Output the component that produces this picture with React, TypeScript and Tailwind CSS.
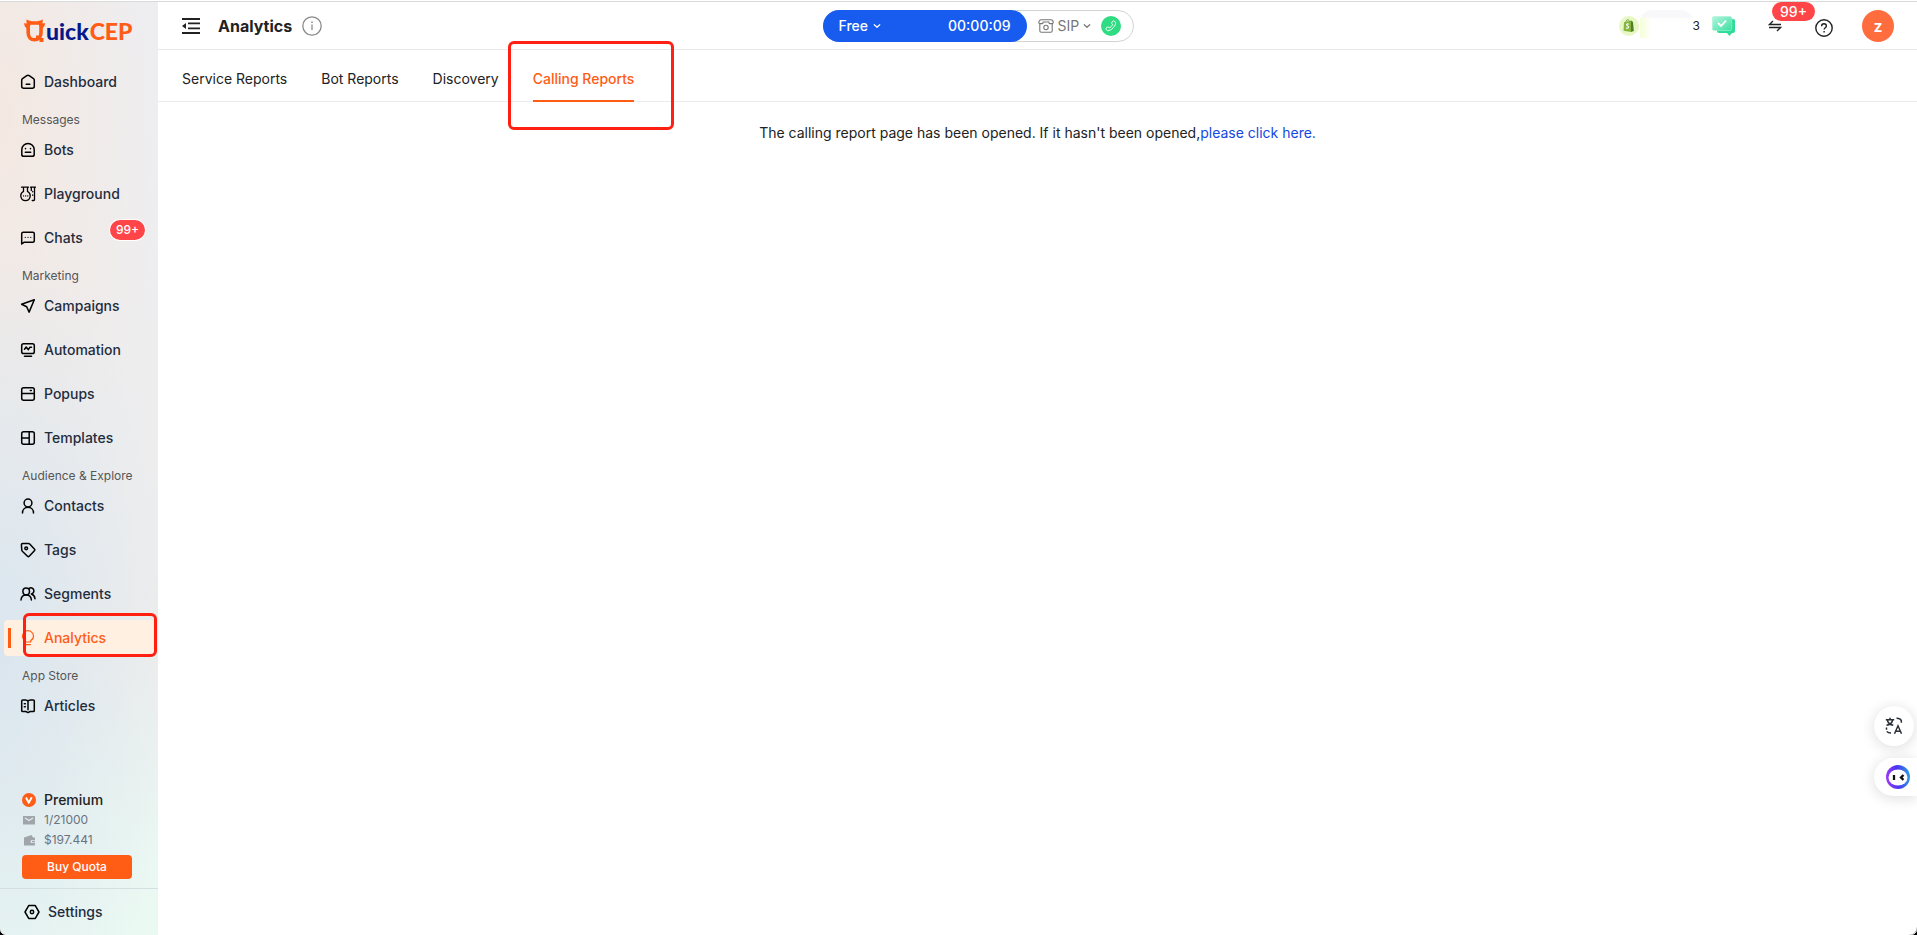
import React from 'react';
import clsx from 'clsx';

interface NavItem {
  label: string;
  icon: React.ReactNode;
  badge?: string;
}

interface NavGroup {
  title?: string;
  items: NavItem[];
}

const Icon = ({ children, className = 'w-4 h-4' }: { children: React.ReactNode; className?: string }) => (
  <svg
    viewBox="0 0 16 16"
    className={clsx('shrink-0', className)}
    fill="none"
    stroke="currentColor"
    strokeWidth="1.5"
    strokeLinecap="round"
    strokeLinejoin="round"
    aria-hidden="true"
  >
    {children}
  </svg>
);

const groups: NavGroup[] = [
  {
    items: [
      {
        label: 'Dashboard',
        icon: (
          <Icon>
            <path d="M1.7 6.3c0-.7.3-1.2.8-1.6L6.8 1.7c.7-.5 1.7-.5 2.4 0l4.300 3c.5.4.8.9.8 1.600v5.900c0 1.100-.9 2-2 2H3.700c-1.100 0-2-.9-2-2z" />
            <path d="M6.200 10.300h3.600" />
          </Icon>
        ),
      },
    ],
  },
  {
    title: 'Messages',
    items: [
      {
        label: 'Bots',
        icon: (
          <Icon>
            <path d="M1.800 7.500A6.200 6 0 0 1 8 1.600a6.200 6 0 0 1 6.200 5.900v4.900c0 1.100-.8 1.900-1.900 1.900H3.700c-1.100 0-1.900-.8-1.900-1.900z" />
            <path d="M5.500 6.600v.2M10.500 6.600v.2M5.300 10.300h5.400" />
          </Icon>
        ),
      },
      {
        label: 'Playground',
        icon: (
          <Icon>
            <path d="M1.500 1.200h7M3.500 1.500v4A4.800 4.800 0 0 0 5.500 14.600a4.800 4.800 0 0 0 2-9.100v-4" strokeWidth="1.300" />
            <path d="M3.500 9.900h.1M5.600 9.900h.1M7.700 9.900h.1M10.500 1.200h5M14.500 1.500v12.200c0 .5-.3.800-.8.800h-1.500M11.300 1.500v3M12.700 5.500v.3M12.700 9v.3" strokeWidth="1.300" />
          </Icon>
        ),
      },
      {
        label: 'Chats',
        badge: '99+',
        icon: (
          <Icon>
            <path d="M1.700 14V3.700c0-.8.700-1.500 1.500-1.500h9.600c.8 0 1.500.7 1.500 1.500v7.100c0 .8-.7 1.500-1.500 1.500H4z" />
            <path d="M5.200 7.300h.1M8 7.300h.1M10.800 7.300h.1" strokeWidth="1.200" />
          </Icon>
        ),
      },
    ],
  },
  {
    title: 'Marketing',
    items: [
      {
        label: 'Campaigns',
        icon: (
          <Icon>
            <path d="M14.300 1.700 1.600 6.300l5.100 2.400 2.400 5.400z" />
          </Icon>
        ),
      },
      {
        label: 'Automation',
        icon: (
          <Icon>
            <rect x="1.700" y="1.700" width="12.600" height="9.800" rx="1.800" />
            <path d="M4.500 7.200 6.200 5l2.200 2.700 1.600-2.500h1.500M4.500 14.300h7" />
          </Icon>
        ),
      },
      {
        label: 'Popups',
        icon: (
          <Icon>
            <rect x="1.700" y="1.700" width="12.600" height="12.600" rx="2" />
            <path d="M1.700 7.500h12.600M10.300 4.600h1" />
          </Icon>
        ),
      },
      {
        label: 'Templates',
        icon: (
          <Icon>
            <rect x="1.700" y="1.700" width="12.600" height="12.600" rx="2" />
            <path d="M9.200 1.700v12.600M1.700 8h7.500" />
          </Icon>
        ),
      },
    ],
  },
  {
    title: 'Audience & Explore',
    items: [
      {
        label: 'Contacts',
        icon: (
          <Icon>
            <circle cx="8" cy="5" r="3.900" />
            <path d="M2.500 15c0-3.100 2.100-5.700 5.500-5.700s5.500 2.600 5.500 5.700" />
          </Icon>
        ),
      },
      {
        label: 'Tags',
        icon: (
          <Icon>
            <path d="M1.400 2.800c0-.7.500-1.200 1.200-1.200l6-.1c.4 0 .8.200 1.100.5l4.700 5c.5.5.5 1.200 0 1.700l-5.200 5.500c-.5.5-1.200.5-1.700 0L2.300 9.200c-.3-.3-.5-.7-.5-1.100z" />
            <circle cx="6.200" cy="6.300" r="1.400" />
          </Icon>
        ),
      },
      {
        label: 'Segments',
        icon: (
          <Icon>
            <circle cx="6.200" cy="5.400" r="3.300" />
            <path d="M1 14c.2-3 2.200-5 5.200-5s5 2 5.200 5M9.200 2.300a3.100 3.100 0 1 1 2.200 5.700c2 .7 3.400 2.500 3.600 4.800" />
          </Icon>
        ),
      },
      {
        label: 'Analytics',
        icon: (
          <Icon>
            <path d="M5.300 12v-1.400C3.700 9.700 2.500 8.100 2.500 6.200a5.500 5.500 0 0 1 11 0c0 1.900-1.200 3.500-2.800 4.400V12zM5.600 14.700h4.800" strokeWidth="1.200" />
          </Icon>
        ),
      },
    ],
  },
  {
    title: 'App Store',
    items: [
      {
        label: 'Articles',
        icon: (
          <Icon>
            <path d="M8 3.200C7.500 2.300 6.700 1.900 5.500 1.900H2.800c-.6 0-1.100.5-1.100 1.100v9.400c0 .6.500 1.100 1.100 1.100h3L8 14.600l2.200-1.100h3c.6 0 1.100-.5 1.100-1.100V3c0-.6-.5-1.100-1.100-1.100h-2.700C9.300 1.900 8.500 2.300 8 3.200zM8 3.200v8.600" />
            <path d="M4.300 5.700h1M4.300 8.800h1" />
          </Icon>
        ),
      },
    ],
  },
];

const tabs = ['Service Reports', 'Bot Reports', 'Discovery', 'Calling Reports'];

const Chevron = () => (
  <Icon className="w-2 h-2">
    <path d="M2.500 5.500 8 10.500l5.500-5" strokeWidth="2.400" />
  </Icon>
);

const Logo = () => (
  <a href="#home" aria-label="QuickCEP" className="flex items-end pl-6 h-[41px] text-[#ff5c16]">
    <svg viewBox="0 0 22 24" className="w-[22px] h-6 shrink-0" fill="none" stroke="currentColor" aria-hidden="true">
      <path
        d="M7 4c-2 0-2.800 1.500-2.800 3.200v6.600c0 4.400 2.600 7 6.300 7s6.500-2.600 6.500-7V7.200C17 5.500 16.200 4 14.200 4z"
        strokeWidth="3.600"
      />
      <path
        d="M4 10C1.200 9 0 6.500.2 4L2.600 4.800 2.400.6C4 1 5.500 2 7.500 2.300zM17.200 10c2.600-1 4-3.500 3.800-6l-2.400.8.200-4.200c-1.600.4-3.100 1.400-5.100 1.700z"
        fill="currentColor"
        stroke="none"
      />
      <path d="M12 16.500h3.500V20H12zM15.500 19h4v4h-4z" fill="currentColor" stroke="none" />
    </svg>
    <span className="font-['Lato'] text-[23px] leading-6 font-black text-[#06198a]">uick</span>
    <span className="ml-px font-['Lato'] text-[23px] leading-6 font-black">CEP</span>
  </a>
);

const NavLink = ({ item, active }: { item: NavItem; active: boolean }) => (
  <a
    href={`#${item.label.toLowerCase()}`}
    className={clsx(
      'relative flex items-center gap-2 h-9 ml-1 mr-1 pl-4 rounded font-medium',
      active ? 'bg-[#fff0e1] text-[#ff5c16]' : 'text-[#1f2d3d]'
    )}
  >
    <span className={active ? 'text-[#ff5c16]' : 'text-black'}>{item.icon}</span>
    {item.label}
    {item.badge && (
      <span className="absolute left-[106px] top-0 h-5 px-[6px] rounded-full bg-[#ff4548] ring-1 ring-white text-white text-xs leading-5 font-medium">
        {item.badge}
      </span>
    )}
    {active && (
      <>
        <span className="absolute left-1 top-2 w-[3px] h-5 bg-[#ff5c16]" />
        <span className="absolute left-[19px] -right-[3px] -top-[7px] -bottom-px border-[3px] border-[#ff2012] rounded-md" />
      </>
    )}
  </a>
);

const Sidebar = () => (
  <aside className="flex flex-col w-[158px] shrink-0 bg-[radial-gradient(ellipse_180px_420px_at_0%_70%,#dae6ef_0%,#dae6ef00_100%),radial-gradient(ellipse_170px_460px_at_0%_12%,#f4e8e1_0%,#f4e8e100_100%),linear-gradient(172deg,#edeef2_0%,#eeedec_70%,#eaf7f2_90%,#ebf9f3_100%)]">
    <Logo />
    <nav className="flex flex-col gap-2 mt-[21px]">
      {groups.map((group, i) => (
        <div key={i}>
          {group.title && <h2 className="h-6 pl-[22px] text-xs leading-6 text-[#555]">{group.title}</h2>}
          <div className="flex flex-col gap-2">
            {group.items.map((item) => (
              <NavLink key={item.label} item={item} active={item.label === 'Analytics'} />
            ))}
          </div>
        </div>
      ))}
    </nav>
    <div className="mt-auto pl-[22px] pr-[26px] pb-[9px]">
      <div className="flex items-center gap-2 h-5 font-medium text-[#222]">
        <svg viewBox="0 0 14 14" className="w-[14px] h-[14px]" aria-hidden="true">
          <circle cx="7" cy="7" r="7" fill="#ff5c16" />
          <path d="M4 4.500 6.700 9.800 9.800 4.300" fill="none" stroke="#fff" strokeWidth="1.900" strokeLinejoin="round" />
        </svg>
        Premium
      </div>
      <div className="flex items-center gap-2 h-5 text-xs text-[#6b7280]">
        <svg viewBox="0 0 14 14" className="w-[14px] h-[14px]" aria-hidden="true">
          <path d="M1 3h12v8.500H1z" fill="#a0a5aa" />
          <path d="m3 5 4 2.500L11 5" fill="none" stroke="#e1ecef" strokeWidth="1.100" />
        </svg>
        1/21000
      </div>
      <div className="flex items-center gap-2 h-5 text-xs text-[#6b7280]">
        <svg viewBox="0 0 14 14" className="w-[14px] h-[14px]" aria-hidden="true">
          <path d="M2 4.500 9.500 2l1.500 2.500h2V7H10a1.500 1.500 0 0 0 0 3h3v2.500H2z" fill="#a0a5aa" />
          <path d="M10 7.700h3v1.600h-3z" fill="#a0a5aa" />
        </svg>
        $197.441
      </div>
      <button className="block w-full h-6 mt-[5px] rounded bg-[#ff5c16] text-white text-xs font-medium">Buy Quota</button>
    </div>
    <a href="#settings" className="flex items-center gap-2 h-[47px] pl-6 border-t border-[#d5dfdf] font-medium text-[#1f2d3d]">
      <Icon className="w-4 h-4 text-black">
        <path d="M4.700 1.600h6.600L15 8l-3.700 6.400H4.700L1 8z" />
        <circle cx="8" cy="8" r="1.700" />
      </Icon>
      Settings
    </a>
  </aside>
);

const Header = () => (
  <header className="flex items-center justify-between h-12 pl-6 pr-[23px] border-b border-[#e8e8e8] text-[#222]">
    <div className="flex items-center pr-4">
      <button aria-label="Collapse menu" className="mr-[18px]">
        <svg viewBox="0 0 18 16" className="w-[18px] h-4" fill="#222" aria-hidden="true">
          <path d="M0 0h18v2H0zM6 4.500h12v1.700H6zM6 9.500h12v1.700H6zM0 14h18v2H0zM4 5v6L0 8z" />
        </svg>
      </button>
      <h1 className="text-base font-bold">Analytics</h1>
      <svg viewBox="0 0 20 20" className="w-5 h-5 ml-[10px]" fill="none" stroke="#8a8a8a" strokeWidth="1.300" aria-hidden="true">
        <circle cx="10" cy="10" r="9.200" />
        <path d="M10 8.500V14" />
        <path d="M10 5.600v1.400" strokeWidth="1.500" />
      </svg>
    </div>

    <div className="flex items-center h-8 rounded-full border border-[#d3d3d3] pr-3">
      <button className="flex items-center justify-between w-[204px] h-8 -ml-px px-4 rounded-full bg-[#175cee] text-white font-medium">
        <span className="flex items-center gap-[5px]">
          Free
          <Chevron />
        </span>
        <span>00:00:09</span>
      </button>
      <button className="flex items-center gap-1 ml-[11px] text-[#777]">
        <Icon>
          <path d="M.8 4.500c0-1.500 1-2.700 2.500-2.700h9.400c1.500 0 2.500 1.200 2.500 2.700 0 .7-.4 1.100-1.100 1.100h-2.200c-.6 0-1-.4-1-1V4H5.100v.6c0 .6-.4 1-1 1H1.900C1.200 5.600.8 5.200.8 4.500zM1.800 5.800v7c0 .9.600 1.500 1.500 1.500h9.400c.9 0 1.500-.6 1.500-1.500v-7" strokeWidth="1.100" />
          <circle cx="8" cy="9.500" r="2.200" strokeWidth="1.100" />
        </Icon>
        SIP
        <Chevron />
      </button>
      <button aria-label="Dial" className="grid place-items-center w-5 h-5 ml-[10px] rounded-full bg-[#2fdc83] text-white">
        <Icon className="w-3 h-3">
          <path d="M10.500 1.500c.6-.6 1.500-.6 2.100 0l1.500 1.700C15 7 8.500 14.500 3.500 14.300l-1.900-1.600c-.6-.5-.6-1.400 0-2l1.600-1.200c.5-.4 1.300-.4 1.700.2l.7.9c2-.8 3.800-2.700 4.500-4.700l-.9-.9c-.5-.5-.5-1.300-.1-1.800z" strokeWidth="1.300" />
        </Icon>
      </button>
    </div>

    <div className="flex items-center">
      <svg viewBox="0 0 20 20" className="w-5 h-5" aria-hidden="true">
        <circle cx="10" cy="10" r="10" fill="#e8f8c4" />
        <path d="m5 6.200 7-1.700V16L4.500 14.700z" fill="#86b53f" />
        <path d="m12 4.500 2 1.500.8 9L12 16z" fill="#4f7f2b" />
        <path d="M6.800 5.800C7 3.600 10 3.200 10.300 5.200" fill="none" stroke="#5e8e3e" strokeWidth=".9" />
        <path d="M9.800 8.200c-1.200-.6-2.300-.2-2.200.7.100.8 2 1.100 1.900 2.300-.1 1.100-1.500 1.300-2.400.6" fill="none" stroke="#fff" strokeWidth="1.100" />
      </svg>
      <div className="flex w-[53px] h-8 ml-px rounded-t-[12px] bg-linear-to-b from-[#f8f8fb] from-20% to-white to-30%">
        <div className="w-[10px] h-5 mt-2 bg-linear-to-r from-[#f4ffd6] to-[#fdfff7]" />
      </div>
      <span className="text-xs">3</span>
      <svg viewBox="0 0 24 20" className="w-6 h-5 ml-3" aria-hidden="true">
        <defs>
          <linearGradient id="bubbleFront" x1="0" y1="0" x2="1" y2="1">
            <stop offset="0" stopColor="#b4f5e0" />
            <stop offset="1" stopColor="#3ddfa0" />
          </linearGradient>
        </defs>
        <path d="M7 3h14c1.200 0 2 .8 2 2v10c0 1.200-.8 2-2 2h-1l-2.500 3-2.500-3H7c-1.200 0-2-.8-2-2V5c0-1.200.8-2 2-2z" fill="#2fdc98" />
        <path d="M2 .5h16c1 0 1.700.7 1.700 1.700v10.600c0 1-.7 1.700-1.700 1.700H2C1 14.500.3 13.800.3 12.800V2.200C.3 1.200 1 .5 2 .5z" fill="url(#bubbleFront)" stroke="#a8f3d8" strokeWidth=".6" />
        <path d="m6 7 3 3 5-5.300" fill="none" stroke="#fff" strokeWidth="1.800" />
      </svg>
      <button aria-label="Transfers" className="relative ml-8">
        <svg viewBox="0 0 14 12" className="w-[14px] h-3" fill="none" stroke="#222" strokeWidth="1.300" aria-hidden="true">
          <path d="M13 4.500H1.500L5 1M1 7.500h11.500L9 11" />
        </svg>
        <span className="absolute left-1 -top-[18px] h-[19px] px-2 rounded-full bg-[#ff4548] text-white text-sm leading-[19px] font-medium">
          99+
        </span>
      </button>
      <button aria-label="Help" className="mt-1 ml-[33px]">
        <svg viewBox="0 0 18 18" className="w-[18px] h-[18px]" fill="none" stroke="#222" strokeWidth="1.400" aria-hidden="true">
          <circle cx="9" cy="9" r="8.200" />
          <path d="M6.600 7.200C6.600 5.700 7.600 4.800 9 4.800s2.400.9 2.400 2.200c0 1.700-2.300 1.700-2.300 3.500M9.100 12v1.500" />
        </svg>
      </button>
      <button aria-label="Account" className="grid place-items-center w-8 h-8 mt-px ml-[29px] rounded-full bg-[#ff6c3d] text-white text-base font-semibold">
        z
      </button>
    </div>
  </header>
);

const App = () => (
  <div className="h-screen pt-px bg-black">
    <div className="relative flex h-full overflow-hidden rounded-b-lg bg-white border-t border-[#d8dada] outline outline-white font-['Inter',sans-serif] text-sm">
      <Sidebar />
      <main className="flex-1 min-w-0">
        <Header />
        <div role="tablist" className="flex gap-[34px] h-[52px] pl-6 border-b border-[#ececec] text-[#222]">
          {tabs.map((tab) => {
            const active = tab === 'Calling Reports';
            return (
              <button
                key={tab}
                role="tab"
                aria-selected={active}
                className={clsx('relative pt-[6px]', active && 'text-[#ff5c16] font-medium')}
              >
                {tab}
                {active && (
                  <>
                    <span className="absolute inset-x-0 -bottom-px h-[2px] bg-[#ff5c16]" />
                    <span className="absolute -left-[25px] -right-10 -top-[9px] -bottom-[29px] border-[3px] border-[#ff2012] rounded-md" />
                  </>
                )}
              </button>
            );
          })}
        </div>
        <p className="mt-[21px] text-center text-[#222]">
          The calling report page has been opened. If it hasn't been opened,
          <a href="#calling-report" className="text-[#1248e0]">please click here.</a>
        </p>
      </main>

      {/* floating helpers docked to the right edge */}
      <div className="absolute right-0 bottom-[139px] flex flex-col items-end gap-3">
        <button aria-label="Translate" className="grid place-items-center w-10 h-10 mr-[3px] rounded-full bg-white shadow-[0_2px_14px_rgba(0,0,0,0.14)]">
          <svg viewBox="0 0 18 18" className="w-[18px] h-[18px]" fill="none" stroke="#2b2f36" strokeWidth="1.500" aria-hidden="true">
            <path d="M.8 2.800h8.400M5 .8v2M2.300 3c.6 2.500 3 4.800 6 5.200M7.700 3c-.6 2.500-3 4.800-6.200 5.200" />
            <path d="M11.500 1.300c2.200-.1 4 .5 4.800 2.200v2.200M1.500 10.500v2.200M1.800 14.300c.8 1.200 2 1.700 4.200 1.700" />
            <path d="m9.500 16.800 3.500-8 3.500 8M10.700 14.200h4.600" />
          </svg>
        </button>
        <button aria-label="Assistant" className="flex items-center w-[43px] h-[38px] pl-3 rounded-l-full bg-white shadow-[0_2px_14px_rgba(0,0,0,0.14)]">
          <svg viewBox="0 0 24 24" className="w-6 h-6" aria-hidden="true">
            <defs>
              <linearGradient id="ring" x1="0" y1=".7" x2="1" y2=".6">
                <stop offset="0" stopColor="#a23cf0" />
                <stop offset=".5" stopColor="#4a35f2" />
                <stop offset="1" stopColor="#2b9be8" />
              </linearGradient>
            </defs>
            <circle cx="12" cy="12" r="12" fill="url(#ring)" />
            <ellipse cx="12" cy="12.500" rx="9.500" ry="8" fill="#fff" />
            <path d="M8 10v5M17.500 10 15 12.500l2.500 2.300" fill="none" stroke="#111" strokeWidth="2.300" />
          </svg>
        </button>
      </div>
    </div>
  </div>
);

export default App;
